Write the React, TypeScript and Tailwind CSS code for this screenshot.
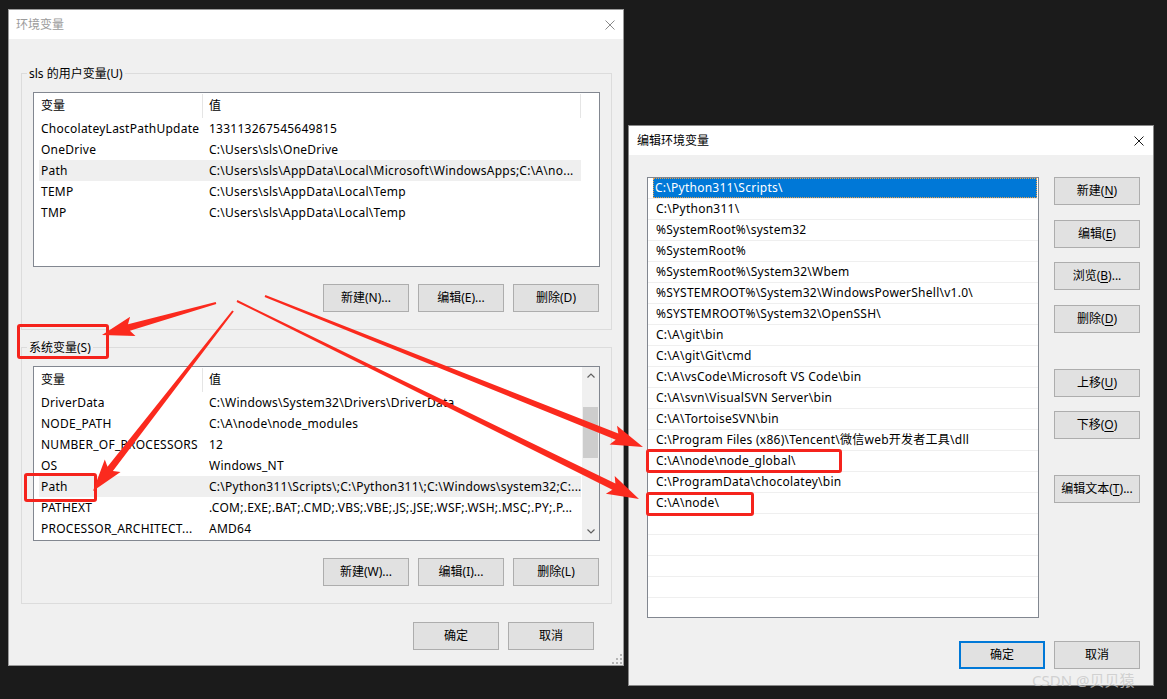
import type { ReactNode } from "react"

type Pt = [number, number]

const font = "font-['Noto_Sans','Noto_Sans_CJK_SC',sans-serif]"

const userVars: [string, string][] = [
  ["ChocolateyLastPathUpdate", "133113267545649815"],
  ["OneDrive", "C:\\Users\\sls\\OneDrive"],
  ["Path", "C:\\Users\\sls\\AppData\\Local\\Microsoft\\WindowsApps;C:\\A\\no..."],
  ["TEMP", "C:\\Users\\sls\\AppData\\Local\\Temp"],
  ["TMP", "C:\\Users\\sls\\AppData\\Local\\Temp"],
]

const sysVars: [string, string][] = [
  ["DriverData", "C:\\Windows\\System32\\Drivers\\DriverData"],
  ["NODE_PATH", "C:\\A\\node\\node_modules"],
  ["NUMBER_OF_PROCESSORS", "12"],
  ["OS", "Windows_NT"],
  ["Path", "C:\\Python311\\Scripts\\;C:\\Python311\\;C:\\Windows\\system32;C:..."],
  ["PATHEXT", ".COM;.EXE;.BAT;.CMD;.VBS;.VBE;.JS;.JSE;.WSF;.WSH;.MSC;.PY;.P..."],
  ["PROCESSOR_ARCHITECT...", "AMD64"],
]

const pathEntries = [
  "C:\\Python311\\Scripts\\",
  "C:\\Python311\\",
  "%SystemRoot%\\system32",
  "%SystemRoot%",
  "%SystemRoot%\\System32\\Wbem",
  "%SYSTEMROOT%\\System32\\WindowsPowerShell\\v1.0\\",
  "%SYSTEMROOT%\\System32\\OpenSSH\\",
  "C:\\A\\git\\bin",
  "C:\\A\\git\\Git\\cmd",
  "C:\\A\\vsCode\\Microsoft VS Code\\bin",
  "C:\\A\\svn\\VisualSVN Server\\bin",
  "C:\\A\\TortoiseSVN\\bin",
  "C:\\Program Files (x86)\\Tencent\\微信web开发者工具\\dll",
  "C:\\A\\node\\node_global\\",
  "C:\\ProgramData\\chocolatey\\bin",
  "C:\\A\\node\\",
  "",
  "",
  "",
  "",
  "",
]

// tapered annotation arrow, thin at the start, head at the tip
function arrowPoints(s: Pt, t: Pt) {
  const dx = t[0] - s[0]
  const dy = t[1] - s[1]
  const len = Math.hypot(dx, dy)
  const ux = dx / len
  const uy = dy / len
  const nx = -uy
  const ny = ux
  const head = 28
  const hw = 10
  const w0 = 1
  const w1 = 3.4
  const bx = t[0] - ux * head
  const by = t[1] - uy * head
  const p = (x: number, y: number) => `${x.toFixed(1)},${y.toFixed(1)}`
  return [
    p(s[0] + nx * w0, s[1] + ny * w0),
    p(bx + nx * w1, by + ny * w1),
    p(bx + nx * hw - ux * 4, by + ny * hw - uy * 4),
    p(t[0], t[1]),
    p(bx - nx * hw - ux * 4, by - ny * hw - uy * 4),
    p(bx - nx * w1, by - ny * w1),
    p(s[0] - nx * w0, s[1] - ny * w0),
  ].join(" ")
}

const arrows: [Pt, Pt][] = [
  [[216, 303], [102, 335]],
  [[233, 311], [93, 491]],
  [[237, 301], [639, 499]],
  [[265, 296], [643, 447]],
]

function CloseIcon({ color }: { color: string }) {
  return (
    <svg width="10" height="10" viewBox="0 0 10 10" className="shrink-0">
      <path d="M0.5 0.5L9.5 9.5M9.5 0.5L0.5 9.5" stroke={color} strokeWidth="1" />
    </svg>
  )
}

function Chevron({ down }: { down?: boolean }) {
  return (
    <svg width="8" height="5" viewBox="0 0 8 5">
      <path
        d={down ? "M0.5 0.5L4 4L7.5 0.5" : "M0.5 4.5L4 1L7.5 4.5"}
        stroke="#606060"
        strokeWidth="1.2"
        fill="none"
      />
    </svg>
  )
}

function WinButton({ children, focused }: { children: ReactNode; focused?: boolean }) {
  return (
    <div
      className={
        focused
          ? "flex h-[28px] w-[86px] shrink-0 items-center justify-center border-2 border-[#0078d7] bg-[#e1e1e1] text-[12px] text-black"
          : "flex h-[28px] w-[86px] shrink-0 items-center justify-center border border-[#adadad] bg-[#e1e1e1] text-[12px] text-black"
      }
    >
      {children}
    </div>
  )
}

function VarList({ rows, selected, scroll }: { rows: [string, string][]; selected: number; scroll?: boolean }) {
  return (
    <div className="flex h-[175px] border border-[#828790] bg-white">
      <div className="min-w-0 flex-1">
        <div className="flex h-[25px]">
          <div className="w-[168px] pl-[7px] pt-[3px] leading-[20px]">变量</div>
          <div className="mt-[1px] w-px bg-[#e5e5e5]" />
          <div className="w-[377px] pl-[6px] pt-[3px] leading-[20px]">值</div>
          {!scroll && <div className="mt-[1px] w-px bg-[#e5e5e5]" />}
        </div>
        {rows.map(([name, value], i) => (
          <div
            key={name + i}
            className={
              i === selected
                ? "ml-[5px] flex h-[21px] w-[542px] items-center bg-[#efefef] tracking-[0.25px]"
                : "ml-[5px] flex h-[21px] w-[542px] items-center tracking-[0.25px]"
            }
          >
            <div className="w-[170px] shrink-0 overflow-hidden whitespace-nowrap pl-[2px]">{name}</div>
            <div className="min-w-0 flex-1 overflow-hidden whitespace-nowrap">{value}</div>
          </div>
        ))}
      </div>
      {scroll && (
        <div className="flex w-[17px] flex-col bg-[#f0f0f0]">
          <div className="flex h-[17px] items-center justify-center">
            <Chevron />
          </div>
          <div className="flex-1">
            <div className="mx-[1px] mt-[23px] h-[51px] bg-[#cdcdcd]" />
          </div>
          <div className="flex h-[17px] items-center justify-center">
            <Chevron down />
          </div>
        </div>
      )}
    </div>
  )
}

function VarGroup({
  label,
  rows,
  selected,
  scroll,
  buttons,
  className,
}: {
  label: string
  rows: [string, string][]
  selected: number
  scroll?: boolean
  buttons: string[]
  className: string
}) {
  return (
    <fieldset className={"border border-[#dcdcdc] " + className}>
      <legend className="ml-[5px] px-[2px] leading-[17px]">{label}</legend>
      <div className="px-[11px] pb-[17px] pt-[10px]">
        <VarList rows={rows} selected={selected} scroll={scroll} />
        <div className="mr-[1px] mt-[17px] flex justify-end gap-[9px]">
          {buttons.map((b) => (
            <WinButton key={b}>{b}</WinButton>
          ))}
        </div>
      </div>
    </fieldset>
  )
}

function EnvDialog() {
  return (
    <div className="absolute left-[8px] top-[9px] flex h-[657px] w-[616px] flex-col border border-[#9a9a9a] bg-[#f0f0f0]">
      <div className="flex h-[29px] items-center justify-between bg-white pl-[7px] pr-[8px] text-[#9b9b9b]">
        <span>环境变量</span>
        <CloseIcon color="#8a8a8a" />
      </div>
      <div className="flex flex-1 flex-col">
        <VarGroup
          className="ml-[12px] mr-[11px] mt-[26px]"
          label="sls 的用户变量(U)"
          rows={userVars}
          selected={2}
          buttons={["新建(N)...", "编辑(E)...", "删除(D)"]}
        />
        <VarGroup
          className="ml-[12px] mr-[11px] mt-[9px]"
          label="系统变量(S)"
          rows={sysVars}
          selected={4}
          scroll
          buttons={["新建(W)...", "编辑(I)...", "删除(L)"]}
        />
        <div className="mt-[18px] flex justify-end gap-[9px] pr-[29px]">
          <WinButton>确定</WinButton>
          <WinButton>取消</WinButton>
        </div>
      </div>
      {/* resize grip */}
      <svg width="10" height="10" viewBox="0 0 10 10" className="absolute bottom-[1px] right-[1px]">
        <g fill="#b5b5b5">
          <rect x="8" y="0" width="2" height="2" />
          <rect x="4" y="4" width="2" height="2" />
          <rect x="8" y="4" width="2" height="2" />
          <rect x="0" y="8" width="2" height="2" />
          <rect x="4" y="8" width="2" height="2" />
          <rect x="8" y="8" width="2" height="2" />
        </g>
      </svg>
    </div>
  )
}

function Mnemonic({ text, k, rest }: { text: string; k: string; rest?: string }) {
  return (
    <span>
      {text}(<span className="underline underline-offset-2">{k}</span>){rest}
    </span>
  )
}

function EditDialog() {
  return (
    <div className="absolute left-[628px] top-[125px] flex h-[561px] w-[526px] flex-col border border-[#888888] bg-[#f0f0f0]">
      <div className="flex h-[29px] items-center justify-between bg-white pl-[8px] pr-[9px] text-black">
        <span>编辑环境变量</span>
        <CloseIcon color="#1a1a1a" />
      </div>
      <div className="flex flex-1 flex-col pb-[16px] pt-[22px]">
        <div className="flex gap-[15px] pl-[18px] pr-[13px]">
          <div className="h-[441px] w-[392px] overflow-hidden border border-[#828790] bg-white tracking-[0.25px]">
            {pathEntries.map((p, i) => (
              <div key={i} className="flex h-[21px] border-b border-[#efefef]">
                {i === 0 ? (
                  <div className="ml-[5px] mr-[1px] flex flex-1 items-center bg-[#0078d7] pl-[2px] text-white outline-1 -outline-offset-1 outline-dotted outline-[#e9a04a]">
                    {p}
                  </div>
                ) : (
                  <div className="ml-[5px] flex flex-1 items-center whitespace-nowrap pl-[3px]">{p}</div>
                )}
              </div>
            ))}
          </div>
          <div className="flex flex-col">
            <WinButton>
              <Mnemonic text="新建" k="N" />
            </WinButton>
            <div className="mt-[15px]">
              <WinButton>
                <Mnemonic text="编辑" k="E" />
              </WinButton>
            </div>
            <div className="mt-[14px]">
              <WinButton>
                <Mnemonic text="浏览" k="B" rest="..." />
              </WinButton>
            </div>
            <div className="mt-[15px]">
              <WinButton>
                <Mnemonic text="删除" k="D" />
              </WinButton>
            </div>
            <div className="mt-[36px]">
              <WinButton>
                <Mnemonic text="上移" k="U" />
              </WinButton>
            </div>
            <div className="mt-[14px]">
              <WinButton>
                <Mnemonic text="下移" k="O" />
              </WinButton>
            </div>
            <div className="mt-[36px]">
              <WinButton>
                <Mnemonic text="编辑文本" k="T" rest="..." />
              </WinButton>
            </div>
          </div>
        </div>
        <div className="mt-[23px] flex justify-end gap-[9px] pr-[13px]">
          <WinButton focused>确定</WinButton>
          <WinButton>取消</WinButton>
        </div>
      </div>
    </div>
  )
}

export default function App() {
  return (
    <div className={"relative h-[699px] w-[1167px] overflow-hidden bg-[#1b1b1b] text-[12px] text-black " + font}>
      <EnvDialog />
      <EditDialog />

      {/* red annotation boxes */}
      <div className="absolute left-[17px] top-[324px] h-[35px] w-[92px] rounded-[3px] border-[3px] border-[#f5231c]" />
      <div className="absolute left-[24px] top-[473px] h-[29px] w-[73px] rounded-[3px] border-[3px] border-[#f5231c]" />
      <div className="absolute left-[646px] top-[449px] h-[24px] w-[196px] rounded-[3px] border-[3px] border-[#f5231c]" />
      <div className="absolute left-[646px] top-[492px] h-[24px] w-[108px] rounded-[3px] border-[3px] border-[#f5231c]" />

      {/* red annotation arrows */}
      <svg className="pointer-events-none absolute left-0 top-0" width="1167" height="699">
        {arrows.map(([s, t], i) => (
          <polygon key={i} points={arrowPoints(s, t)} fill="#fb2a1e" />
        ))}
      </svg>

      <div className="absolute left-[1032px] top-[670px] text-[15px] leading-[20px] text-[#c9c9c9]/80">
        CSDN @贝贝猿
      </div>
    </div>
  )
}
